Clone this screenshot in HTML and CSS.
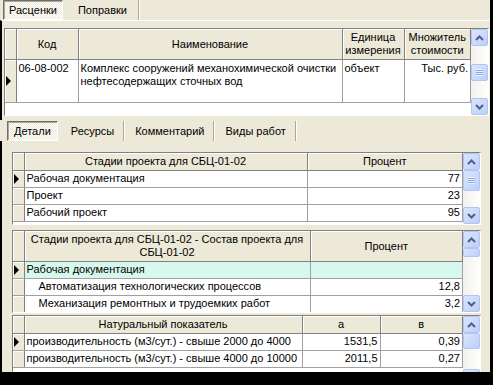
FILE: index.html
```html
<!DOCTYPE html>
<html lang="ru">
<head>
    <meta charset="UTF-8">
    <title>Расценки</title>
    <link rel="stylesheet" href="styles.css">
</head>
<body>
<div class="window">
    <div class="tabs tabs-top">
        <span class="tab active">Расценки</span>
        <span class="tab">Поправки</span>
    </div>
    <div class="page page-top">
        <div class="grid grid-top">
            <div class="grid-body">
                <table>
                    <colgroup>
                        <col class="c-ind"><col style="width:62px"><col style="width:264px"><col style="width:62px"><col>
                    </colgroup>
                    <thead>
                        <tr class="h2">
                            <th class="ind"></th>
                            <th>Код</th>
                            <th>Наименование</th>
                            <th>Единица измерения</th>
                            <th>Множитель стоимости</th>
                        </tr>
                    </thead>
                    <tbody>
                        <tr class="tall">
                            <td class="ind"><span class="arrow"></span></td>
                            <td>06-08-002</td>
                            <td>Комплекс сооружений механохимической очистки нефтесодержащих сточных вод</td>
                            <td>объект</td>
                            <td class="num">Тыс. руб.</td>
                        </tr>
                    </tbody>
                </table>
            </div>
            <div class="vscroll mid">
                <div class="sbtn"><svg width="9" height="6" viewBox="0 0 9 6"><path d="M1 5 L4.5 1.5 L8 5" fill="none" stroke="#4d6185" stroke-width="2"/></svg></div>
                <div class="track"><div class="thumb"><i></i></div></div>
                <div class="sbtn"><svg width="9" height="6" viewBox="0 0 9 6"><path d="M1 1 L4.5 4.5 L8 1" fill="none" stroke="#4d6185" stroke-width="2"/></svg></div>
            </div>
        </div>
    </div>

    <div class="tabs tabs-detail">
        <span class="tab active">Детали</span>
        <span class="tab">Ресурсы</span>
        <span class="tab">Комментарий</span>
        <span class="tab">Виды работ</span>
    </div>
    <div class="page page-detail">
        <div class="grid grid-a">
            <div class="grid-body">
                <table>
                    <colgroup><col class="c-ind"><col style="width:283px"><col></colgroup>
                    <thead>
                        <tr><th class="ind"></th><th>Стадии проекта для СБЦ-01-02</th><th>Процент</th></tr>
                    </thead>
                    <tbody>
                        <tr><td class="ind"><span class="arrow"></span></td><td>Рабочая документация</td><td class="num">77</td></tr>
                        <tr><td class="ind"></td><td>Проект</td><td class="num">23</td></tr>
                        <tr><td class="ind"></td><td>Рабочий проект</td><td class="num">95</td></tr>
                    </tbody>
                </table>
            </div>
            <div class="vscroll">
                <div class="sbtn"><svg width="9" height="6" viewBox="0 0 9 6"><path d="M1 5 L4.5 1.5 L8 5" fill="none" stroke="#4d6185" stroke-width="2"/></svg></div>
                <div class="track"><div class="thumb t20"><i></i></div></div>
                <div class="sbtn"><svg width="9" height="6" viewBox="0 0 9 6"><path d="M1 1 L4.5 4.5 L8 1" fill="none" stroke="#4d6185" stroke-width="2"/></svg></div>
            </div>
        </div>

        <div class="grid grid-b">
            <div class="grid-body">
                <table>
                    <colgroup><col class="c-ind"><col style="width:286px"><col></colgroup>
                    <thead>
                        <tr class="h2"><th class="ind"></th><th>Стадии проекта для СБЦ-01-02 - Состав проекта для СБЦ-01-02</th><th>Процент</th></tr>
                    </thead>
                    <tbody>
                        <tr class="sel"><td class="ind"><span class="arrow"></span></td><td>Рабочая документация</td><td class="num"></td></tr>
                        <tr><td class="ind"></td><td class="sub">Автоматизация технологических процессов</td><td class="num">12,8</td></tr>
                        <tr><td class="ind"></td><td class="sub">Механизация ремонтных и трудоемких работ</td><td class="num">3,2</td></tr>
                    </tbody>
                </table>
            </div>
            <div class="vscroll">
                <div class="sbtn"><svg width="9" height="6" viewBox="0 0 9 6"><path d="M1 5 L4.5 1.5 L8 5" fill="none" stroke="#4d6185" stroke-width="2"/></svg></div>
                <div class="track"><div class="thumb t8"></div></div>
                <div class="sbtn"><svg width="9" height="6" viewBox="0 0 9 6"><path d="M1 1 L4.5 4.5 L8 1" fill="none" stroke="#4d6185" stroke-width="2"/></svg></div>
            </div>
        </div>

        <div class="grid grid-c">
            <div class="grid-body">
                <table>
                    <colgroup><col class="c-ind"><col style="width:278px"><col style="width:78px"><col></colgroup>
                    <thead>
                        <tr><th class="ind"></th><th>Натуральный показатель</th><th>а</th><th>в</th></tr>
                    </thead>
                    <tbody>
                        <tr><td class="ind"><span class="arrow"></span></td><td>производительность (м3/сут.) - свыше 2000 до 4000</td><td class="num">1531,5</td><td class="num">0,39</td></tr>
                        <tr><td class="ind"></td><td>производительность (м3/сут.) - свыше 4000 до 10000</td><td class="num">2011,5</td><td class="num">0,27</td></tr>
                    </tbody>
                </table>
            </div>
            <div class="vscroll">
                <div class="sbtn"><svg width="9" height="6" viewBox="0 0 9 6"><path d="M1 5 L4.5 1.5 L8 5" fill="none" stroke="#4d6185" stroke-width="2"/></svg></div>
                <div class="track"><div class="thumb t16"></div></div>
                <div class="sbtn"><svg width="9" height="6" viewBox="0 0 9 6"><path d="M1 1 L4.5 4.5 L8 1" fill="none" stroke="#4d6185" stroke-width="2"/></svg></div>
            </div>
        </div>
    </div>
</div>
</body>
</html>
```

FILE: styles.css
```css
body {
    margin: 0;
    background: #000;
    font-family: "Liberation Sans", Arial, sans-serif;
    font-size: 11px;
    color: #000;
}
.window {
    width: 490px;
    height: 372px;
    background: #ece9d8;
    overflow: hidden;
}
/* Вкладки в виде плоских кнопок */
.tabs {
    display: flex;
    height: 20px;
    align-items: stretch;
}
.tabs-top {
    padding-left: 3px;
}
.tabs-detail {
    height: 20px;
    padding-left: 5px;
    padding-top: 1px;
    margin-left: 2px;
}
.tab {
    display: flex;
    align-items: center;
    padding: 0 9px;
    border-right: 1px solid #aca899;
    box-shadow: 1px 0 0 #fff;
    margin-right: 2px;
}
.tab.active {
    background: repeating-conic-gradient(#fff 0 25%, #ece9d8 0 50%) 0 0 / 2px 2px;
    border: 1px solid #fff;
    border-top-color: #716f64;
    border-left-color: #716f64;
    box-shadow: inset 1px 1px 0 #aca899;
    padding: 0 6px;
    margin-right: 4px;
}
.tabs-top .tab {
    padding: 0 11px;
}
.tabs-top .tab.active {
    padding: 0 5px;
}
.page {
    border-left: 2px solid #000;
}
.page-top {
    padding: 7px 1px 2px 2px;
    border-top: 1px solid #fff;
}
.page-detail {
    padding: 11px 6px 0 10px;
}
/* Сетки */
.grid {
    display: flex;
    border: 1px solid;
    border-color: #808080 #fff #fff #808080;
    background: #fff;
    margin-bottom: 2px;
}
.grid-body {
    flex: 1;
    overflow: hidden;
}
.grid-top { height: 86px; }
.grid-a { height: 71px; width: 467px; margin-bottom: 5px; }
.grid-b { height: 81px; width: 467px; }
.grid-c { height: 70px; width: 467px; }
table {
    width: 100%;
    table-layout: fixed;
    border-collapse: collapse;
}
.c-ind { width: 11px; }
th, td {
    padding: 0 2px;
    border-right: 1px solid #a0a0a0;
    border-bottom: 1px solid #a0a0a0;
    white-space: nowrap;
    overflow: hidden;
    line-height: 13px;
}
th {
    background: #ece9d8;
    font-weight: normal;
    height: 17px;
    box-shadow: inset 1px 1px 0 #fff;
    border-right-color: #808080;
    border-bottom-color: #808080;
}
.h2 th {
    height: 30px;
    white-space: normal;
    line-height: 13px;
}
td {
    height: 15px;
    vertical-align: top;
    padding-top: 1px;
}
.tall td {
    height: 40px;
    white-space: normal;
    padding-top: 2px;
}
td.ind {
    background: #ece9d8;
    box-shadow: inset 1px 1px 0 #fff;
    border-right-color: #808080;
    padding: 0;
    vertical-align: middle;
}
td.num { text-align: right; }
td.sub { padding-left: 14px; }
.sel td { background: #d7f8ed; }
.sel td.ind { background: #ece9d8; }
.arrow {
    display: block;
    width: 0;
    height: 0;
    margin-left: 1px;
    border-top: 5px solid transparent;
    border-bottom: 5px solid transparent;
    border-left: 5px solid #000;
}
/* Полоса прокрутки XP */
.vscroll {
    width: 17px;
    display: flex;
    flex-direction: column;
    background: linear-gradient(90deg, #f3f1ec, #fefefb);
}
.sbtn, .thumb {
    height: 15px;
    border: 1px solid #b3c6f1;
    border-radius: 2px;
    background: linear-gradient(135deg, #dbe5fd, #bccffa);
    display: flex;
    align-items: center;
    justify-content: center;
}
.track {
    flex: 1;
    display: flex;
    flex-direction: column;
}
.vscroll.mid .track { justify-content: center; }
.thumb { height: 15px; }
.thumb.t20 { height: 19px; }
.thumb.t8 { height: 7px; }
.thumb.t16 { height: 14px; }
.thumb i {
    width: 7px;
    height: 7px;
    background: repeating-linear-gradient(#eef3fe 0 1px, #8ca5dc 1px 2px);
}
```
